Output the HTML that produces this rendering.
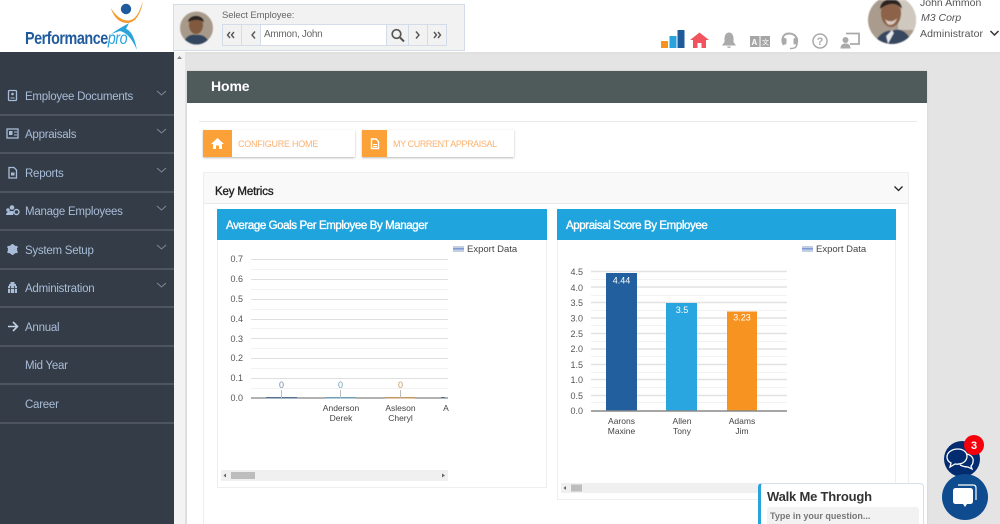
<!DOCTYPE html>
<html><head><meta charset="utf-8"><style>
html,body{margin:0;padding:0;width:1000px;height:524px;overflow:hidden;background:#e4e4e4;font-family:"Liberation Sans",sans-serif}
#w{position:relative;width:1000px;height:524px;overflow:hidden;background:#e4e4e4}
.a{position:absolute}
.t{position:absolute;white-space:nowrap}
.s{-webkit-text-stroke:.35px currentColor}
.nav{position:absolute;left:0;width:174px;height:37px;border-bottom:2px solid #4e555e}
.nav span{position:absolute;left:25px;top:13.500px;font-size:11.5px;color:#a9bdd8;letter-spacing:-.25px;white-space:nowrap}
.nav svg{position:absolute;left:0;top:0}
</style></head><body><div id="w">
<div class="a" style="left:0;top:0;width:1000px;height:52px;background:#fff;border-bottom:2px solid #e0e0e0"></div>
<svg class="a" style="left:100px;top:0" width="50" height="52"><circle cx="26" cy="9" r="5.2" fill="#1f5b9c"/><path d="M11 8C16 17 24 22 31 20C37 18 40 10 43 1C41 13 36 23 27 23C19 23 13 16 11 8Z" fill="#f59a2f"/><path d="M10 35C16 30 24 26 29 23L26 29C32 31 35 40 37 50C33 41 28 33 20 31C17 32 13 33 10 35Z" fill="#2aa3dc"/></svg>
<div class="t" style="left:25px;top:28px;font-size:17.5px;font-weight:bold;color:#1f5b9c;letter-spacing:-.55px;transform:scaleX(.82);transform-origin:0 0">Performance<i style="color:#2aa3dc;font-weight:normal">pro</i></div>
<div class="a" style="left:173px;top:4px;width:290px;height:45px;background:#f2f2f2;border:1px solid #d3dce9"></div>
<svg class="a" style="left:180px;top:11px;filter:blur(.6px)" width="33" height="34"><defs><clipPath id="c1"><circle cx="16.5" cy="17" r="16.5"/></clipPath></defs><g clip-path="url(#c1)"><rect width="33" height="34" fill="#a89a8a"/><ellipse cx="16" cy="14" rx="7" ry="9" fill="#80593f"/><path d="M8 11C9 3 23 3 24 11C20 8 13 8 8 11Z" fill="#2c2420"/><path d="M3 34C5 25 11 23 16 24C22 23 28 26 30 34Z" fill="#33465e"/></g></svg>
<div class="t" style="left:222px;top:10px;font-size:9.5px;color:#666;letter-spacing:-.1px">Select Employee:</div>
<div class="a" style="left:222px;top:24px;width:225px;height:22px;background:#f2f2f2;border:1px solid #d3dce9;box-sizing:border-box"></div>
<div class="a" style="left:261px;top:25px;width:125px;height:20px;background:#fff"></div>
<div class="a" style="left:241px;top:25px;width:1px;height:20px;background:#d3dce9"></div>
<div class="a" style="left:260px;top:25px;width:1px;height:20px;background:#d3dce9"></div>
<div class="a" style="left:386px;top:25px;width:1px;height:20px;background:#d3dce9"></div>
<div class="a" style="left:408px;top:25px;width:1px;height:20px;background:#d3dce9"></div>
<div class="a" style="left:427px;top:25px;width:1px;height:20px;background:#d3dce9"></div>
<div class="t" style="left:264px;top:29px;font-size:10px;color:#666;letter-spacing:-.3px">Ammon, John</div>
<svg class="a" style="left:222px;top:24px" width="225" height="22" fill="none" stroke="#555" stroke-width="1.4"><path d="M8 8L5.5 11L8 14M12 8L9.5 11L12 14M33 7.5L30 11L33 14.5"/><circle cx="174.5" cy="10" r="4.3" stroke-width="1.7"/><path d="M178 13.500L182 17.500" stroke-width="2"/><path d="M194 7.500L197 11L194 14.500M212 8L214.500 11L212 14M216 8L218.500 11L216 14"/></svg>
<svg class="a" style="left:660px;top:30px" width="208" height="20"><rect x="1" y="11" width="7" height="7" fill="#f7941e"/><rect x="9.500" y="6" width="7" height="12" fill="#29a3dc"/><rect x="17.500" y="0" width="7" height="18" fill="#1f5b9c"/>
<path d="M30 10L39.500 2.500L49 10L46 10L46 18L41.500 18L41.500 13L37.500 13L37.500 18L33 18L33 10Z" fill="#f2545f"/>
<path d="M69 2.500C66 2.500 64.500 5.500 64.500 8.500L64.500 12L62 15.500L76 15.500L73.500 12L73.500 8.500C73.500 5.500 72 2.500 69 2.500ZM67 16.500C67.500 18.500 70.500 18.500 71 16.500Z" fill="#aaa"/>
<rect x="90" y="6" width="9.500" height="11" fill="#a6a6a6"/><rect x="100.500" y="6" width="9.500" height="11" fill="#a6a6a6"/><text x="91.500" y="15" font-size="8" fill="#fff" font-family="Liberation Sans" font-weight="bold">A</text><text x="102" y="14.500" font-size="7" fill="#fff" font-family="Noto Sans CJK SC, sans-serif">文</text>
<path d="M124 15C121 11 122 3.500 129 3.500C135 3.500 138 8 137 13" fill="none" stroke="#aaa" stroke-width="2"/><rect x="122.500" y="8" width="4" height="6.500" rx="1.500" fill="#aaa"/><rect x="133.500" y="8" width="4" height="6.500" rx="1.500" fill="#aaa"/><path d="M137 13C137 18 134 18.500 130 18.500" fill="none" stroke="#aaa" stroke-width="1.500"/>
<circle cx="160" cy="11" r="7" fill="none" stroke="#aaa" stroke-width="1.500"/><text x="160" y="15" font-size="11" font-weight="bold" text-anchor="middle" fill="#aaa" font-family="Liberation Sans">?</text>
<path d="M186 3.500L199 3.500L199 14L190 14" fill="none" stroke="#aaa" stroke-width="1.800"/><circle cx="185.500" cy="10" r="3" fill="#aaa"/><path d="M180.500 18.500C180.500 14.500 183 13.500 185.500 13.500C188 13.500 190.500 14.500 190.500 18.500Z" fill="#aaa"/></svg>
<svg class="a" style="left:868px;top:0;filter:blur(.6px)" width="48" height="44"><defs><clipPath id="c2"><circle cx="24" cy="20" r="24"/></clipPath></defs><g clip-path="url(#c2)"><rect width="48" height="44" fill="#a99b8d"/><rect x="30" width="18" height="30" fill="#cfc8bf"/><ellipse cx="23" cy="13" rx="10" ry="14" fill="#8c6248"/><path d="M12 9C13 -4 33 -4 34 9C30 2 20 2 12 9Z" fill="#2b2320"/><path d="M17 19C20 22 26 22 29 18C28 23 25 25 22 25C19 25 18 22 17 19Z" fill="#fff" opacity=".65"/><path d="M6 44C12 32 20 30 24 31C30 28 40 30 44 44Z" fill="#36475f"/><path d="M18 36L24 30L26 33L20 44Z" fill="#e8e8ea"/></g></svg>
<div class="t" style="left:920px;top:-3px;font-size:10.500px;color:#555">John Ammon</div>
<div class="t" style="left:921px;top:12px;font-size:10.500px;color:#555;font-style:italic">M3 Corp</div>
<div class="t" style="left:920px;top:28px;font-size:10.500px;color:#555;letter-spacing:.1px">Administrator</div>
<svg class="a" style="left:989px;top:29px" width="11" height="9"><path d="M1.500 2L5.500 6L9.500 2" fill="none" stroke="#333" stroke-width="1.500"/></svg>

<div class="a" style="left:0;top:52px;width:174px;height:472px;background:#343c47"></div>
<div class="a" style="left:174px;top:52px;width:11px;height:472px;background:#f3f3f3"></div>
<svg class="a" style="left:176px;top:55px" width="7" height="6"><path d="M3.500 1L6 4L1 4Z" fill="#888"/></svg>

<div class="nav" style="top:77px"><span>Employee Documents</span><svg width="174" height="37"><rect x="8.500" y="13.500" width="8" height="10" rx="1" fill="none" stroke="#a9bdd8" stroke-width="1.300"/><circle cx="12.500" cy="17" r="1.300" fill="#a9bdd8"/><path d="M10.500 21L14.500 21" stroke="#a9bdd8"/><path d="M157 14L161.500 18L166 14" fill="none" stroke="#7f8894"/></svg></div>
<div class="nav" style="top:115px"><span>Appraisals</span><svg width="174" height="37"><rect x="7" y="14" width="11" height="9" fill="none" stroke="#a9bdd8" stroke-width="1.300"/><rect x="9" y="16" width="3.500" height="4" fill="#a9bdd8"/><path d="M14 17L17 17M14 20L17 20" stroke="#a9bdd8"/><path d="M157 14L161.500 18L166 14" fill="none" stroke="#7f8894"/></svg></div>
<div class="nav" style="top:154px"><span>Reports</span><svg width="174" height="37"><path d="M9 13.500L14 13.500L16.500 16L16.500 24L9 24Z" fill="none" stroke="#a9bdd8" stroke-width="1.300"/><rect x="11" y="18.500" width="3.500" height="3" fill="#a9bdd8"/><path d="M157 14L161.500 18L166 14" fill="none" stroke="#7f8894"/></svg></div>
<div class="nav" style="top:192px"><span>Manage Employees</span><svg width="174" height="37"><circle cx="12" cy="15.500" r="2.300" fill="#a9bdd8"/><circle cx="8" cy="18" r="1.800" fill="#a9bdd8"/><circle cx="16.500" cy="20" r="2.500" fill="none" stroke="#a9bdd8" stroke-width="1.400"/><path d="M6 23C6 19 13 18 14 20L13 23Z" fill="#a9bdd8"/><path d="M157 14L161.500 18L166 14" fill="none" stroke="#7f8894"/></svg></div>
<div class="nav" style="top:231px"><span>System Setup</span><svg width="174" height="37"><circle cx="12.500" cy="18.500" r="3.500" fill="none" stroke="#a9bdd8" stroke-width="2.500"/><path d="M12.500 13L12.500 24M7.500 15.500L17.500 21.500M7.500 21.500L17.500 15.500" stroke="#a9bdd8" stroke-width="2"/><path d="M157 14L161.500 18L166 14" fill="none" stroke="#7f8894"/></svg></div>
<div class="nav" style="top:269px"><span>Administration</span><svg width="174" height="37"><path d="M10.500 13L14.500 13L14.500 15L16 15L16 17L17 17L17 24L8 24L8 17L9 17L9 15L10.500 15Z" fill="#a9bdd8"/><path d="M8 19.500L17 19.500M10.500 17L10.500 24M14.500 17L14.500 24" stroke="#343c47" stroke-width=".8"/><path d="M157 14L161.500 18L166 14" fill="none" stroke="#7f8894"/></svg></div>
<div class="nav" style="top:308px"><span>Annual</span><svg width="174" height="37"><path d="M8 18.500L17 18.500M13 14L17.500 18.500L13 23" fill="none" stroke="#c2d1e6" stroke-width="1.600"/></svg></div>
<div class="nav" style="top:346px"><span>Mid Year</span></div>
<div class="nav" style="top:385px"><span>Career</span></div>

<div class="a" style="left:187px;top:71px;width:740px;height:453px;background:#fff;box-shadow:0 0 2px #ccc"></div>
<div class="a" style="left:187px;top:71px;width:740px;height:32px;background:#4f5a5b"></div>
<div class="t" style="left:211px;top:78px;font-size:14px;font-weight:bold;color:#fff;letter-spacing:-.1px">Home</div>
<div class="a" style="left:199px;top:121px;width:718px;height:1px;background:#e9e9e9"></div>

<div class="a" style="left:203px;top:130px;width:152px;height:27px;background:#fff;box-shadow:0 1px 2px #bbb"></div>
<div class="a" style="left:203px;top:130px;width:29px;height:27px;background:#fba137"></div>
<svg class="a" style="left:210px;top:137px" width="15" height="13"><path d="M7.500 1L1 7L3 7L3 12L6 12L6 8.500L9 8.500L9 12L12 12L12 7L14 7Z" fill="#fff"/></svg>
<div class="t" style="left:238px;top:139px;font-size:9px;color:#fbb271;letter-spacing:-.25px">CONFIGURE HOME</div>
<div class="a" style="left:362px;top:130px;width:152px;height:27px;background:#fff;box-shadow:0 1px 2px #bbb"></div>
<div class="a" style="left:362px;top:130px;width:25px;height:27px;background:#fba137"></div>
<svg class="a" style="left:370px;top:138px" width="10" height="12"><path d="M1.500 1L6 1L8.500 3.500L8.500 10.500L1.500 10.500Z" fill="none" stroke="#fff" stroke-width="1.400"/><path d="M3 6.500L7 6.500M3 8.500L7 8.500" stroke="#fff"/></svg>
<div class="t" style="left:393px;top:139px;font-size:9px;color:#fbb271;letter-spacing:-.4px">MY CURRENT APPRAISAL</div>

<div class="a" style="left:203px;top:172px;width:706px;height:360px;border:1px solid #eee;box-sizing:border-box"></div>
<div class="a" style="left:204px;top:173px;width:704px;height:30px;background:#f9f9f9;border-bottom:1px solid #eaeaea"></div>
<div class="t s" style="left:215px;top:186px;font-size:11.500px;color:#222;letter-spacing:-.15px">Key Metrics</div>
<svg class="a" style="left:893px;top:185px" width="11" height="8"><path d="M1.500 1.500L5.500 5.500L9.500 1.500" fill="none" stroke="#222" stroke-width="1.300"/></svg>

<!-- Left card -->
<div class="a" style="left:217px;top:209px;width:330px;height:279px;border:1px solid #eee;box-sizing:border-box"></div>
<div class="a" style="left:217px;top:209px;width:330px;height:31px;background:#20a4dd"></div>
<div class="t s" style="left:226px;top:220px;font-size:11.500px;color:#fff;letter-spacing:-.4px">Average Goals Per Employee By Manager</div>
<svg class="a" style="left:217px;top:240px;font-family:'Liberation Sans',sans-serif" width="330" height="248">
<rect x="236" y="6" width="11" height="6" fill="#c5cfe2"/><rect x="236" y="8" width="11" height="1.500" fill="#7f9ad6"/>
<text x="250" y="12" font-size="9.500" fill="#444">Export Data</text>
<g stroke="#f2f2f2"><path d="M34 29.500H231M34 49.500H231M34 69.500H231M34 88.500H231M34 108.500H231M34 128.500H231M34 148.500H231"/></g>
<g stroke="#dfdfdf"><path d="M34 19.500H231M34 39.500H231M34 59.500H231M34 79.500H231M34 98.500H231M34 118.500H231M34 138.500H231"/></g>
<path d="M34 158H231" stroke="#666" stroke-width="1"/>
<rect x="49" y="157" width="31" height="1.500" fill="#56728f"/><rect x="108" y="157" width="31" height="1.500" fill="#6f9fb6"/><rect x="168" y="157" width="30" height="1.500" fill="#c4995f"/><rect x="224" y="157" width="4" height="1.500" fill="#56728f"/>
<g stroke="#bbb"><path d="M64.500 150V158M123.500 150V158M183.500 150V158"/></g>
<g font-size="9" fill="#555" text-anchor="end"><text x="26" y="22">0.7</text><text x="26" y="42">0.6</text><text x="26" y="62">0.5</text><text x="26" y="82">0.4</text><text x="26" y="102">0.3</text><text x="26" y="121">0.2</text><text x="26" y="141">0.1</text><text x="26" y="161">0.0</text></g>
<g font-size="9" text-anchor="middle"><text x="64.500" y="148" fill="#7189a8">0</text><text x="123.500" y="148" fill="#6f9fb6">0</text><text x="183.500" y="148" fill="#c4995f">0</text></g>
<g font-size="8.500" fill="#444" text-anchor="middle"><text x="124" y="171">Anderson</text><text x="124" y="181">Derek</text><text x="183.500" y="171">Asleson</text><text x="183.500" y="181">Cheryl</text><text x="229" y="171">A</text></g>
<rect x="4" y="230" width="227" height="11" fill="#f0f0f0"/><rect x="14" y="232" width="24" height="7" fill="#bdbdbd"/><path d="M9 233.500L6.500 235.500L9 237.500Z M225 233.500L228 235.500L225 237.500Z" fill="#666"/>
</svg>

<!-- Right card -->
<div class="a" style="left:557px;top:209px;width:339px;height:291px;border:1px solid #eee;box-sizing:border-box"></div>
<div class="a" style="left:557px;top:209px;width:339px;height:31px;background:#20a4dd"></div>
<div class="t s" style="left:566px;top:220px;font-size:11.500px;color:#fff;letter-spacing:-.4px">Appraisal Score By Employee</div>
<svg class="a" style="left:557px;top:240px;font-family:'Liberation Sans',sans-serif" width="339" height="260">
<rect x="245" y="6" width="11" height="6" fill="#c5cfe2"/><rect x="245" y="8" width="11" height="1.500" fill="#7f9ad6"/>
<text x="259" y="12" font-size="9.500" fill="#444">Export Data</text>
<g stroke="#f2f2f2"><path d="M34 39.500H230M34 55.500H230M34 70.500H230M34 85.500H230M34 101.500H230M34 116.500H230M34 132.500H230M34 147.500H230M34 162.500H230"/></g>
<g stroke="#e2e2e2" stroke-width="1.500"><path d="M34 31.500H230M34 47H230M34 62.500H230M34 78H230M34 93.500H230M34 109H230M34 124.500H230M34 139.500H230M34 155.500H230"/></g>
<rect x="49" y="33" width="31" height="138" fill="#215f9e"/><rect x="109" y="63" width="31" height="108" fill="#29a6df"/><rect x="170" y="71.500" width="30" height="99.500" fill="#f79321"/>
<path d="M34 171H230" stroke="#888" stroke-width="1.500"/>
<g font-size="9" fill="#555" text-anchor="end"><text x="26" y="35">4.5</text><text x="26" y="51">4.0</text><text x="26" y="66">3.5</text><text x="26" y="81.500">3.0</text><text x="26" y="97">2.5</text><text x="26" y="112">2.0</text><text x="26" y="128">1.5</text><text x="26" y="143">1.0</text><text x="26" y="159">0.5</text><text x="26" y="174">0.0</text></g>
<g font-size="9" fill="#fff" text-anchor="middle"><text x="64.500" y="43.500">4.44</text><text x="125" y="73">3.5</text><text x="185" y="80.500">3.23</text></g>
<g font-size="8.500" fill="#444" text-anchor="middle"><text x="64.500" y="184">Aarons</text><text x="64.500" y="194">Maxine</text><text x="125" y="184">Allen</text><text x="125" y="194">Tony</text><text x="185" y="184">Adams</text><text x="185" y="194">Jim</text></g>
<rect x="4" y="243" width="205" height="10" fill="#f0f0f0"/><rect x="14" y="244.500" width="11" height="7" fill="#bdbdbd"/><path d="M9 246L6.500 248L9 250Z" fill="#666"/>
</svg>

<!-- Chat -->
<div class="a" style="left:758px;top:483px;width:166px;height:45px;background:#fff;border:1px solid #d5e0ea;border-left:3px solid #29a3dc;border-radius:4px 4px 0 0;box-sizing:border-box"></div>
<div class="t" style="left:767px;top:489px;font-size:13px;font-weight:bold;color:#333;letter-spacing:-.2px">Walk Me Through</div>
<div class="a" style="left:767px;top:507px;width:152px;height:17px;background:#f2f2f2;border-radius:3px 3px 0 0"></div>
<div class="t" style="left:770px;top:511px;font-size:9px;font-weight:bold;color:#777">Type in your question...</div>
<svg class="a" style="left:940px;top:434px" width="50" height="90"><circle cx="22" cy="25" r="18" fill="#032b6f"/><path d="M18 15C11 15 7 19 7 23C7 26 9 28 11 29L10 33L15 30C21 31 27 28 27 22C27 18 23 15 18 15Z" fill="#032b6f" stroke="#fff" stroke-width="1.300"/><path d="M27 20C31 21 34 24 33 28C33 30 32 31 31 32L32 35L28 33C25 33 22 32 20 31" fill="none" stroke="#fff" stroke-width="1.300"/><circle cx="34" cy="11" r="10" fill="#f6000c"/><text x="34" y="15" font-family="Liberation Sans" font-size="11" font-weight="bold" fill="#fff" text-anchor="middle">3</text><circle cx="25" cy="63" r="23" fill="#0f4c8f"/><path d="M16 54H30C32 54 33 55 33 57V67C33 69 32 70 30 70H27L25 73L23 70H16C14 70 13 69 13 67V57C13 55 14 54 16 54Z" fill="#fff"/><path d="M18 51H33C35 51 36 52 36 54V66" fill="none" stroke="#fff" stroke-width="1.200"/></svg>
</div></body></html>
